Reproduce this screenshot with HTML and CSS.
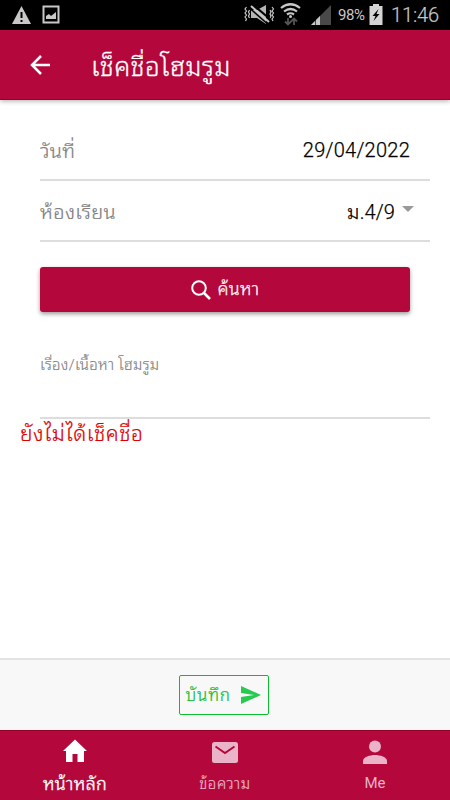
FILE: index.html
```html
<!DOCTYPE html>
<html lang="th">
<head>
<meta charset="utf-8">
<meta name="viewport" content="width=device-width">
<title>เช็คชื่อโฮมรูม</title>
<link rel="stylesheet" href="styles.css">
</head>
<body>
<div class="status">
  <svg width="70" height="30" viewBox="0 0 70 30">
    <path d="M21.500 6L31 24H12Z" fill="#c8c8c8"/>
    <path d="M21.500 12v6M21.500 20v2" stroke="#000" stroke-width="2"/>
    <path d="M43.500 6.500h15v16h-15z" fill="none" stroke="#c8c8c8" stroke-width="2"/>
    <path d="M46 19v-3l3-2 2 2 5-4v7z" fill="#c8c8c8"/>
  </svg>
  <div class="status-right">
    <svg width="92" height="30" viewBox="243 0 92 30">
      <g fill="none" stroke="#c8c8c8" stroke-width="1.200">
        <path d="M246.500 7l-1.500 2 1.500 2-1.500 2 1.500 2-1.500 2 1.500 2-1 2M249.500 10l-1 2 1 2-1 2 1 2M270 10l1 2-1 2 1 2-1 2M272 7l1.500 2-1.500 2 1.500 2-1.500 2 1.500 2-1.500 2 1 2"/>
      </g>
      <path d="M251 10h6l9-5v19l-9-6h-6z" fill="#b4b4b4"/>
      <path d="M252 4l18 15" stroke="#000" stroke-width="2"/>
      <path d="M251 6l18 16" stroke="#c8c8c8" stroke-width="2"/>
      <path d="M250 8.500l17 15" stroke="#000" stroke-width="1.500"/>
      <g fill="none" stroke="#c8c8c8" stroke-width="2.200"><path d="M281 8q9.500-7.500 19 0M284 11.500q6.500-5 13 0M287 14.500q3.500-2.500 7 0"/></g>
      <circle cx="290.500" cy="16.500" r="1.500" fill="#c8c8c8"/>
      <path d="M288 18v6m-3-2.500l3 3 3-3M294 25v-6m-3 2.500l3-3 3 3" stroke="#555" stroke-width="1.800" fill="none"/>
      <path d="M311 25l20-20v20z" fill="#494949"/>
      <path d="M311 25l4-4v4zM316 20l4-4v9h-4z" fill="#c8c8c8"/>
    </svg>
    <span class="battery-text">98%</span>
    <svg class="battery" width="14" height="30" viewBox="0 0 14 30"><path d="M4 4h6v2h3.500v19H.5V6H4z" fill="#d4d4d4"/><path d="M9.500 9L3.500 16h3L4.500 21l6-7H7.500z" fill="#000"/></svg>
    <span class="clock">11:46</span>
  </div>
</div>
<header class="header">
  <svg width="20" height="20" viewBox="0 0 20 20"><path d="M11 1L2 10l9 9M2 10h18" fill="none" stroke="#fff" stroke-width="2.500"/></svg>
  <h1>เช็คชื่อโฮมรูม</h1>
</header>
<main class="content">
  <div class="form">
    <div class="row"><span class="label day-label">วันที่</span><span class="value date">29/04/2022</span></div>
    <div class="row room"><span class="label">ห้องเรียน</span><span class="value">ม.4/9</span><i class="caret"></i></div>
    <button class="search"><svg width="20" height="20" viewBox="0 0 20 20"><circle cx="8" cy="8" r="6.800" fill="none" stroke="#fff" stroke-width="2"/><path d="M13 13l6 6" stroke="#fff" stroke-width="2.600"/></svg><span>ค้นหา</span></button>
    <div class="topic"><span>เรื่อง/เนื้อหา โฮมรูม</span></div>
  </div>
  <p class="notice">ยังไม่ได้เช็คชื่อ</p>
</main>
<div class="savebar">
  <button class="save"><span>บันทึก</span><svg width="20" height="18" viewBox="0 0 20 18"><path d="M0 0l20 9L0 18v-7l13-2L0 7z" fill="#28ca52"/></svg></button>
</div>
<nav class="tabs">
  <div class="tab active"><svg width="26" height="26" viewBox="0 0 26 26"><path d="M10.500 23v-8h5v8H22V12h3L13 .5 1 12h3v11z" fill="#fff"/></svg><span class="home-label">หน้าหลัก</span></div>
  <div class="tab"><svg width="28" height="26" viewBox="0 0 28 26"><rect x="1" y="3" width="26" height="21" rx="2.500" fill="#eab3c7"/><path d="M4.500 7.500l9.500 6.500 9.500-6.500" fill="none" stroke="#b4073c" stroke-width="2"/></svg><span class="message-label">ข้อความ</span></div>
  <div class="tab"><svg width="24" height="26" viewBox="0 0 24 26"><circle cx="12" cy="7.500" r="6" fill="#eab3c7"/><path d="M0 25v-3c0-4 7-6 12-6s12 2 12 6v3z" fill="#eab3c7"/></svg><span class="me-label">Me</span></div>
</nav>
</body>
</html>
```
FILE: styles.css
```css
* { box-sizing: border-box; }
body { margin: 0; width: 450px; height: 800px; overflow: hidden; display: flex; flex-direction: column; background: #fff; font-family: Roboto, "Noto Sans Thai Looped", "Noto Looped Thai", "Droid Sans Thai", Loma, Waree, Garuda, Umpush, "Noto Serif Thai", "Noto Sans Thai", "Noto Sans", sans-serif; }
svg { display: block; flex: none; }
span, h1, p { white-space: nowrap; }
button { font: inherit; cursor: pointer; }
.status { height: 30px; background: #000; color: #c8c8c8; display: flex; justify-content: space-between; flex: none; }
.status-right { display: flex; line-height: 31px; width: 207px; }
.battery-text { font-size: 15px; width: 30px; margin-left: 3px; letter-spacing: -.4px; }
.battery { margin-left: 1px; }
.clock { font-size: 20px; margin-left: 8px; font-weight: 300; letter-spacing: -.1px; -webkit-text-stroke: .2px #c8c8c8; }
.header { height: 70px; flex: none; background: #b4073c; border-bottom: 1px solid #990025; box-shadow: 0 1px 5px #0005; color: #fff; display: flex; align-items: center; padding-left: 30px; z-index: 1; }
.header h1 { margin: 4px 0 0 41px; font-size: 26px; font-weight: 300; line-height: 40px; letter-spacing: .4px; -webkit-text-stroke: .3px #fff; }
.content { flex: 1; padding-top: 20px; min-height: 0; }
.form { margin-left: 40px; width: 390px; }
.row { height: 61px; border-bottom: 2px solid #ddd; display: flex; align-items: center; padding-right: 20px; font-size: 20px; line-height: 30px; }
.label { color: #808080; font-weight: 300; letter-spacing: .35px; padding-top: 2px; -webkit-text-stroke: .2px #808080; }
.value { margin-left: auto; color: #111; }
.date { font-weight: 300; color: #000; -webkit-text-stroke: .25px #000; letter-spacing: .25px; }
.room { padding-right: 16px; }
.room .value { padding-top: 2px; font-weight: 300; color: #000; -webkit-text-stroke: .25px #000; letter-spacing: .1px; }
.caret { border: 6px solid transparent; border-top-color: #999; border-bottom: 0; margin: -4px 0 0 7px; }
.search { width: 370px; height: 45px; margin-top: 25px; border: 0; border-radius: 3px; background: #b4073c; color: #fff; font-size: 18px; font-weight: 300; letter-spacing: .2px; line-height: 27px; box-shadow: 0 2px 4px #0006; display: flex; align-items: center; justify-content: center; gap: 7px; padding: 0; -webkit-text-stroke: .25px #fff; }
.search span { margin-top: -2px; }
.topic { height: 107px; border-bottom: 2px solid #ddd; padding-top: 41px; color: #808080; font-size: 15px; font-weight: 300; line-height: 24px; letter-spacing: .3px; -webkit-text-stroke: .15px #808080; }
.notice { margin: 0 0 0 20px; color: #dc0000; font-size: 21px; font-weight: 300; line-height: 30px; letter-spacing: .5px; -webkit-text-stroke: .2px #dc0000; }
.savebar { height: 72px; flex: none; border-top: 2px solid #e4e4e4; background: #f8f8f8; display: flex; justify-content: center; padding: 15px 3px 0 0; }
.save { width: 90px; height: 40px; border: 1px solid #0abe2f; border-radius: 2px; background: transparent; color: #0abe2f; font-size: 17px; font-weight: 300; letter-spacing: .8px; display: flex; align-items: center; justify-content: space-between; padding: 0 7px 0 6px; -webkit-text-stroke: .2px #0abe2f; }
.save span { margin-top: -3px; }
.tabs { height: 70px; flex: none; background: #b4073c; border-top: 1px solid #990025; display: grid; grid-template-columns: repeat(3, 1fr); color: #eab3c7; }
.tab { display: flex; flex-direction: column; align-items: center; padding-top: 8px; font-size: 15px; line-height: 24px; }
.tab span { margin-top: 7px; }
.tab .message-label { letter-spacing: .6px; font-weight: 300; -webkit-text-stroke: .2px #eab3c7; }
.tab svg + .me-label { margin-top: 6px; }
.active { color: #fff; font-size: 18px; }
.tab .home-label { font-weight: 300; -webkit-text-stroke: .4px #fff; letter-spacing: .3px; }
```
